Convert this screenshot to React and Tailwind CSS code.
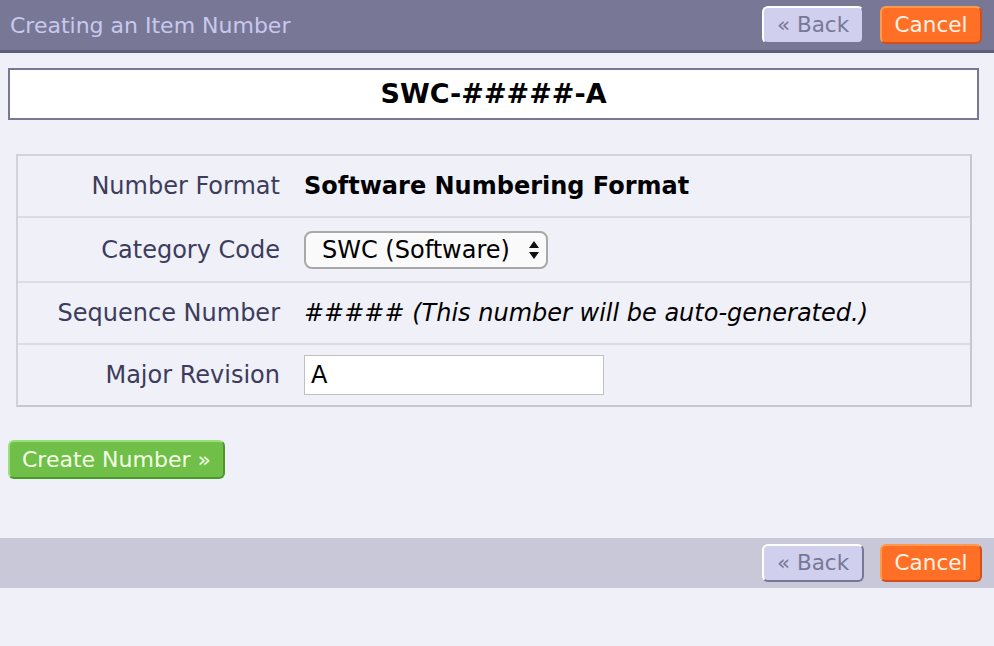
import React from 'react'

const FONT = { fontFamily: '"DejaVu Sans", Verdana, sans-serif' }

function BackButton() {
  return (
    <button className="h-[38px] w-[102px] rounded-[6px] border-2 border-t-white border-l-white border-r-[#787896] border-b-[#787896] bg-[#d0d0ee] text-[21.5px] leading-none text-[#787896]">
      « Back
    </button>
  )
}

function CancelButton() {
  return (
    <button className="h-[38px] w-[102px] rounded-[6px] border-2 border-t-[#ff9a4a] border-l-[#ff9a4a] border-r-[#d0501a] border-b-[#d0501a] bg-[#ff7026] text-[21.5px] leading-none text-[#fff3e6]">
      Cancel
    </button>
  )
}

function ButtonBar({ children, className }) {
  return (
    <div className={'flex items-center gap-4 pr-3 ' + className}>
      {children}
      <div className="ml-auto flex gap-4">
        <BackButton />
        <CancelButton />
      </div>
    </div>
  )
}

const rows = [
  { label: 'Number Format', kind: 'bold', value: 'Software Numbering Format', h: 'h-[60px]' },
  { label: 'Category Code', kind: 'select', value: 'SWC (Software)', h: 'h-[65px]' },
  { label: 'Sequence Number', kind: 'italic', value: '##### (This number will be auto-generated.)', h: 'h-[62px]' },
  { label: 'Major Revision', kind: 'input', value: 'A', h: 'h-[62px]' },
]

export default function App() {
  return (
    <div className="min-h-[646px] bg-[#f0f0f8]" style={FONT}>
      <ButtonBar className="h-[53px] border-b-[3px] border-[#5e5e7c] bg-[#787896]">
        <h1 className="pl-[10px] text-[22px] text-[#c8c8ee]">Creating an Item Number</h1>
      </ButtonBar>

      <div className="px-2 pt-[15px]">
        <div className="mr-[7px] flex h-[52px] items-center justify-center border-2 border-[#787896] bg-white text-[27px] font-bold text-black">
          SWC-#####-A
        </div>

        <div className="mx-2 mt-[34px] mr-[14px] border-2 border-[#d2d2da] border-r-[#c8c8cc] border-b-[#c8c8cc]">
          {rows.map((r, i) => (
            <div
              key={r.label}
              className={'flex items-center ' + (i > 0 ? 'border-t-2 border-[#dcdce4] ' : '') + r.h}
            >
              <div className="w-[262px] text-right text-[24px] text-[#3c3c5c]">{r.label}</div>
              <div className="pl-[24px] text-[24px] text-black">
                {r.kind === 'bold' && <span className="font-bold">{r.value}</span>}
                {r.kind === 'italic' && <span className="italic">{r.value}</span>}
                {r.kind === 'select' && (
                  <div className="flex h-[38px] w-[244px] items-center justify-between rounded-[8px] border-2 border-[#a8a8a8] bg-[#fafafa] pl-[16px] pr-[6px]">
                    <span>{r.value}</span>
                    <svg width="12" height="22" viewBox="0 0 12 22">
                      <path d="M1 9 L6 2 L11 9 Z" fill="#111" />
                      <path d="M1 13 L6 20 L11 13 Z" fill="#111" />
                    </svg>
                  </div>
                )}
                {r.kind === 'input' && (
                  <div className="flex h-[40px] w-[300px] items-center border border-[#c0c0c0] bg-white pl-[6px]">
                    {r.value}
                  </div>
                )}
              </div>
            </div>
          ))}
        </div>

        <button className="mt-[33px] h-[39px] rounded-[6px] border-2 border-t-[#9ae07a] border-l-[#9ae07a] border-r-[#4a9a2a] border-b-[#4a9a2a] bg-[#70bf48] px-[12px] text-[22px] leading-none text-[#f4ffe6]">
          Create Number »
        </button>
      </div>

      <ButtonBar className="mt-[59px] h-[50px] bg-[#c8c8d8]" />
    </div>
  )
}
